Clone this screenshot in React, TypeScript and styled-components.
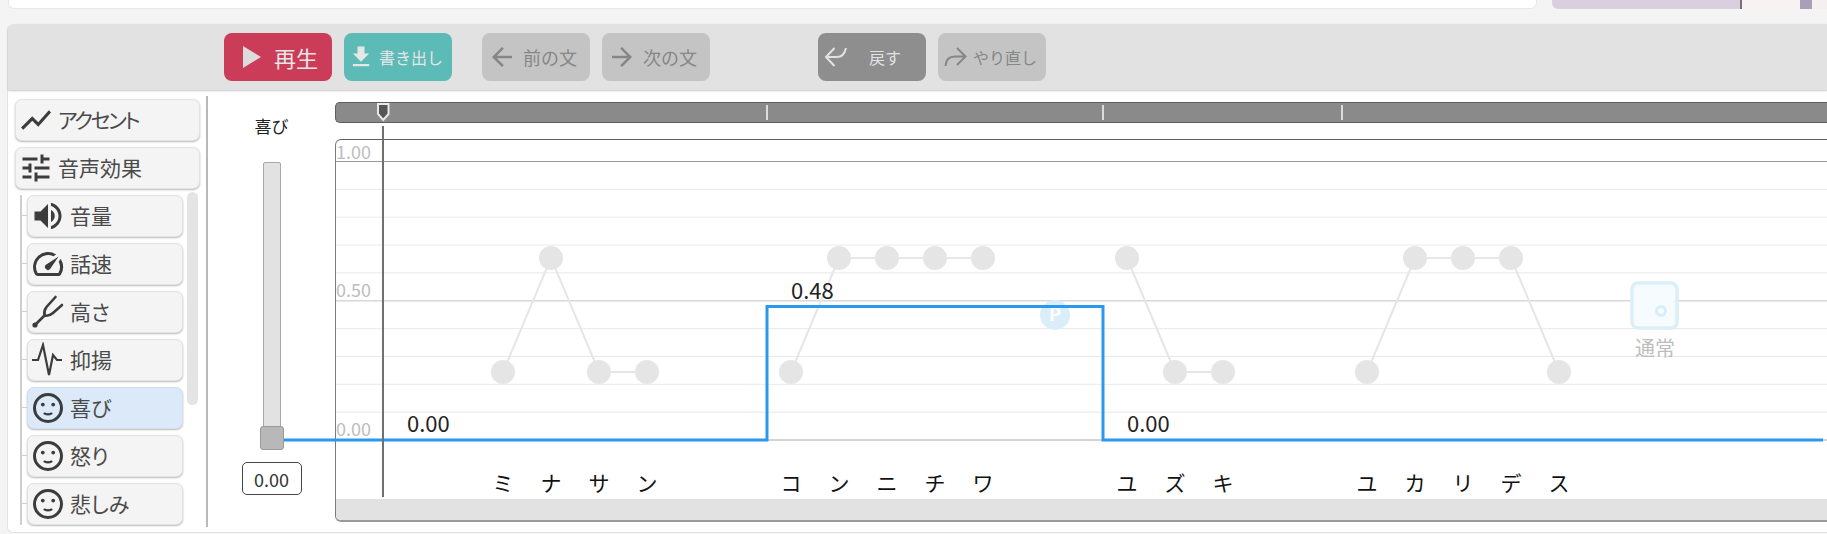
import React from "react";
import styled, { createGlobalStyle } from "styled-components";
import { MdShowChart, MdTune, MdVolumeUp, MdSpeed, MdFileDownload, MdArrowBack, MdArrowForward } from "react-icons/md";

const FONT = `"Noto Sans CJK JP", "Noto Sans", sans-serif`;

const Global = createGlobalStyle`
  html, body { margin: 0; padding: 0; background: #f4f4f4; }
  body { font-family: ${FONT}; overflow: hidden; }
`;

const Page = styled.div`
  width: 1827px;
  height: 534px;
  overflow: hidden;
  background: #f4f4f4;
`;
const TopRow = styled.div`
  display: flex;
  height: 9px;
  gap: 15px;
  padding-left: 8px;
`;
const WhiteCard = styled.div`
  width: 1529px;
  background: #fff;
  border: 1px solid #e8e8e8;
  border-top: 0;
  border-radius: 0 0 6px 6px;
  box-sizing: border-box;
`;
const ArtCard = styled.div`
  flex: 1;
  display: flex;
  border-radius: 0 0 0 6px;
  overflow: hidden;
`;
const ArtPiece = styled.div<{ $w: number; $c: string }>`
  width: ${p => p.$w}px;
  background: ${p => p.$c};
`;
const Panel = styled.div`
  margin: 15px 0 0 7px;
  width: 1820px;
  height: 509px;
  background: #fff;
  border-radius: 6px 0 0 6px;
  border-left: 1px solid #e4e4e4;
  border-bottom: 1px solid #e4e4e4;
  box-sizing: border-box;
  display: flex;
  flex-direction: column;
`;
const Toolbar = styled.div`
  height: 66px;
  flex: none;
  background: #e2e2e2;
  border-radius: 6px 0 0 0;
  box-shadow: 0 1px 2px rgba(0,0,0,.22);
  display: flex;
  align-items: center;
  gap: 12px;
  padding-left: 216px;
  position: relative;
`;
const ToolGap = styled.div<{ $w: number }>`
  width: ${p => p.$w}px;
`;
const TOOL = {
  play: { bg: "#cb3c58", fg: "#e6e6e6", size: 22, pad: 19, gap: 13 },
  export: { bg: "#5cbab7", fg: "#e6e6e6", size: 16, pad: 3, gap: 4 },
  off: { bg: "#c4c4c4", fg: "#868686", size: 18, pad: 5, gap: 6 },
  undo: { bg: "#8e8e8e", fg: "#e2e2e2", size: 16, pad: 5, gap: 18 },
  redo: { bg: "#c4c4c4", fg: "#868686", size: 16, pad: 5, gap: 2 },
};
const ToolButton = styled.div<{ $kind: keyof typeof TOOL }>`
  width: 108px;
  height: 48px;
  box-sizing: border-box;
  border-radius: 8px;
  background: ${p => TOOL[p.$kind].bg};
  color: ${p => TOOL[p.$kind].fg};
  font-size: ${p => TOOL[p.$kind].size}px;
  display: flex;
  align-items: center;
  padding-left: ${p => TOOL[p.$kind].pad}px;
  gap: ${p => TOOL[p.$kind].gap}px;
  white-space: nowrap;
  svg { flex: none; }
`;
const Body = styled.div`
  flex: 1;
  min-height: 0;
  display: flex;
`;
const Sidebar = styled.div`
  width: 200px;
  flex: none;
  box-sizing: border-box;
  margin: 6px 0 5px;
  padding: 3px 6px 0 7px;
  border-right: 2px solid #b9b9b9;
  display: flex;
  flex-direction: column;
  gap: 6px;
  overflow: hidden;
`;
const MenuButton = styled.div<{ $active?: boolean }>`
  height: 42px;
  flex: none;
  box-sizing: border-box;
  background: ${p => (p.$active ? "#dce9f9" : "#f4f4f4")};
  border: 1px solid ${p => (p.$active ? "#d3dfee" : "#e2e2e2")};
  border-radius: 7px;
  box-shadow: 0 1px 2px rgba(0,0,0,.28);
  display: flex;
  align-items: center;
  gap: 4px;
  padding: 0 0 2px 2px;
  color: #4a4a4a;
  font-size: 21px;
  font-feature-settings: "palt";
  svg { flex: none; color: #3c3c3c; margin-top: 2px; }
`;
const TightLabel = styled.span`
  letter-spacing: -2.4px;
`;
const Tree = styled.div`
  position: relative;
  margin-left: 5px;
  padding-left: 5px;
  border-left: 2px solid #cfcfcf;
  width: 156px;
  display: flex;
  flex-direction: column;
  gap: 6px;
`;
const TreeItem = styled.div`
  position: relative;
  &::before {
    content: "";
    position: absolute;
    left: -5px;
    top: 20px;
    width: 5px;
    height: 1px;
    background: #cfcfcf;
  }
`;
const ScrollThumb = styled.div`
  position: absolute;
  left: 165px;
  top: -3px;
  width: 11px;
  height: 213px;
  border-radius: 6px;
  background: #e4e4e4;
`;
const SliderColumn = styled.div`
  width: 127px;
  flex: none;
  box-sizing: border-box;
  padding-top: 25px;
  display: flex;
  flex-direction: column;
  align-items: center;
`;
const SliderLabel = styled.div`
  font-size: 17px;
  line-height: 22px;
  color: #222;
`;
const Track = styled.div`
  margin-top: 25px;
  width: 18px;
  height: 280px;
  box-sizing: border-box;
  background: #e2e2e2;
  border: 1px solid #a8a8a8;
  border-radius: 2px 2px 0 0;
  position: relative;
`;
const Thumb = styled.div`
  position: absolute;
  left: -4px;
  top: 263px;
  width: 24px;
  height: 24px;
  box-sizing: border-box;
  border-radius: 3px;
  background: #b8b8b8;
  border: 1px solid #9a9a9a;
`;
const ValueBox = styled.div`
  margin-top: 20px;
  width: 60px;
  height: 33px;
  box-sizing: border-box;
  border: 1px solid #444;
  border-radius: 5px;
  background: #fff;
  font-size: 18px;
  color: #333;
  display: flex;
  align-items: center;
  justify-content: center;
`;
const Timeline = styled.div`
  flex: 1;
  min-width: 0;
  padding-top: 12px;
  display: flex;
  flex-direction: column;
  position: relative;
`;
const Seek = styled.div`
  height: 21px;
  flex: none;
  box-sizing: border-box;
  background: #8a8a8a;
  border-top: 1px solid #5e5e5e;
  border-bottom: 1px solid #5e5e5e;
  border-left: 1px solid #5e5e5e;
  border-radius: 5px 0 0 5px;
`;
const Chart = styled.div`
  margin-top: 16px;
  height: 383px;
  flex: none;
  box-sizing: border-box;
  border-top: 1px solid #5e5e5e;
  border-left: 1px solid #7a7a7a;
  border-bottom: 2px solid #9a9a9a;
  border-radius: 6px 0 0 6px;
  display: flex;
  flex-direction: column;
`;
const ChartSpace = styled.div`
  flex: 1;
`;
const HScroll = styled.div`
  height: 21px;
  flex: none;
  background: #e2e2e2;
  border-radius: 0 0 0 5px;
`;
const Overlay = styled.svg`
  position: absolute;
  left: 0;
  top: 0;
  width: 1492px;
  height: 443px;
  overflow: visible;
  pointer-events: none;
  font-family: ${FONT};
`;
const GridText = styled.text`
  font-size: 18px;
  fill: #bdbdbd;
`;
const ValueText = styled.text`
  font-size: 22px;
  fill: #222;
`;
const KanaText = styled.text`
  font-size: 21px;
  fill: #111;
  text-anchor: middle;
`;
const ModeText = styled.text`
  font-size: 20px;
  fill: #bdbdbd;
  text-anchor: middle;
`;
const BadgeText = styled.text`
  font-size: 18px;
  font-weight: 700;
  fill: #fff;
  text-anchor: middle;
`;

const icon36 = { size: 36 };

const Smile = () => (
  <svg width="36" height="36" viewBox="0 0 36 36" fill="none">
    <circle cx="18" cy="18" r="13.5" stroke="#3c3c3c" strokeWidth="3" />
    <circle cx="12.8" cy="14.6" r="1.9" fill="#3c3c3c" />
    <circle cx="23.2" cy="14.6" r="1.9" fill="#3c3c3c" />
    <path d="M14.5 23.6c2.2 1 4.8 1 7 0" stroke="#3c3c3c" strokeWidth="2.2" strokeLinecap="round" />
  </svg>
);
const Fork = () => (
  <svg width="36" height="36" viewBox="0 0 36 36" fill="none" stroke="#3c3c3c" strokeWidth="2.6" strokeLinecap="round">
    <path d="M5 31 L14.5 21.5" />
    <path d="M25.5 3 L16.5 13 Q13.5 17 14.5 21.5 Q19 22.5 23 19 L32 11" />
    <circle cx="5" cy="31" r="2.6" fill="#3c3c3c" stroke="none" />
  </svg>
);
const Pulse = () => (
  <svg width="36" height="36" viewBox="0 0 36 36" fill="none" stroke="#3c3c3c" strokeWidth="2.2">
    <path d="M2 18 H8 L13 3 L19 33 L23 13 L27 18 H32" />
  </svg>
);
const PlayIcon = () => (
  <svg width="18" height="22" viewBox="0 0 18 22"><path d="M0 0 L18 11 L0 22 Z" fill="#dcdcdc" /></svg>
);
const UndoIcon = () => (
  <svg width="28" height="28" viewBox="0 0 28 28" fill="none" stroke="#e2e2e2" strokeWidth="2">
    <path d="M11.5 5 L3 14 L11.5 23" />
    <path d="M3 14 H14 Q21 14 23 5" />
  </svg>
);
const RedoIcon = () => (
  <svg width="28" height="28" viewBox="0 0 28 28" fill="none" stroke="#868686" strokeWidth="2">
    <path d="M14 5 L22.5 13.5 L14 22" />
    <path d="M22 13.5 H12 Q3 13.5 2.5 23" />
  </svg>
);

const XS = [503, 551, 599, 647, 791, 839, 887, 935, 983, 1127, 1175, 1223, 1367, 1415, 1463, 1511, 1559];
const KANA = "ミナサンコンニチワユズキユカリデス".split("");
const HI = [0, 1, 0, 0, 0, 1, 1, 1, 1, 1, 0, 0, 0, 1, 1, 1, 0];
const GROUPS = [[0, 4], [4, 9], [9, 12], [12, 17]];
const yOf = (i: number) => (HI[i] ? 258 : 372);

const gridColor = (i: number) => (i === 0 ? "#9a9a9a" : i === 5 ? "#d8d8d8" : i === 10 ? "#a8a8a8" : "#e9e9e9");
const GRID = Array.from({ length: 11 }, (_, i) => ({ y: 161.5 + i * 27.85, color: gridColor(i), w: i === 5 ? 1.5 : 1 }));

const SUBS: { label: string; icon: React.ReactNode; active?: boolean }[] = [
  { label: "音量", icon: <MdVolumeUp {...icon36} /> },
  { label: "話速", icon: <MdSpeed {...icon36} /> },
  { label: "高さ", icon: <Fork /> },
  { label: "抑揚", icon: <Pulse /> },
  { label: "喜び", icon: <Smile />, active: true },
  { label: "怒り", icon: <Smile /> },
  { label: "悲しみ", icon: <Smile /> },
];

export default function App() {
  return (
    <Page>
      <Global />
      <TopRow>
        <WhiteCard />
        <ArtCard>
          <ArtPiece $w={188} $c="#dacfdf" />
          <ArtPiece $w={2} $c="#77707c" />
          <ArtPiece $w={58} $c="#f8f2f2" />
          <ArtPiece $w={12} $c="#a9a0b6" />
          <ArtPiece $w={15} $c="#f6efef" />
        </ArtCard>
      </TopRow>
      <Panel>
        <Toolbar>
          <ToolButton $kind="play"><PlayIcon />再生</ToolButton>
          <ToolButton $kind="export"><MdFileDownload size={28} />書き出し</ToolButton>
          <ToolGap $w={6} />
          <ToolButton $kind="off"><MdArrowBack size={30} />前の文</ToolButton>
          <ToolButton $kind="off"><MdArrowForward size={30} />次の文</ToolButton>
          <ToolGap $w={84} />
          <ToolButton $kind="undo"><UndoIcon />戻す</ToolButton>
          <ToolButton $kind="redo"><RedoIcon />やり直し</ToolButton>
        </Toolbar>
        <Body>
          <Sidebar>
            <MenuButton><MdShowChart {...icon36} /><TightLabel>アクセント</TightLabel></MenuButton>
            <MenuButton><MdTune {...icon36} />音声効果</MenuButton>
            <Tree>
              <ScrollThumb />
              {SUBS.map(s => (
                <TreeItem key={s.label}>
                  <MenuButton $active={s.active}>{s.icon}{s.label}</MenuButton>
                </TreeItem>
              ))}
            </Tree>
          </Sidebar>
          <SliderColumn>
            <SliderLabel>喜び</SliderLabel>
            <Track><Thumb /></Track>
            <ValueBox>0.00</ValueBox>
          </SliderColumn>
          <Timeline>
            <Seek />
            <Chart>
              <ChartSpace />
              <HScroll />
            </Chart>
            <Overlay viewBox="335 90 1492 443">
              {GRID.map(g => (
                <line key={g.y} x1={336} x2={1827} y1={g.y} y2={g.y} stroke={g.color} strokeWidth={g.w} />
              ))}
              <GridText x={336} y={159}>1.00</GridText>
              <GridText x={336} y={297}>0.50</GridText>
              <GridText x={336} y={436}>0.00</GridText>
              {GROUPS.map(([a, b]) => (
                <polyline key={a} fill="none" stroke="#e6e6e6" strokeWidth={2}
                  points={XS.slice(a, b).map((x, i) => `${x},${yOf(a + i)}`).join(" ")} />
              ))}
              {XS.map((x, i) => <circle key={i} cx={x} cy={yOf(i)} r={12} fill="#e5e5e5" />)}
              {XS.map((x, i) => <KanaText key={i} x={x} y={491}>{KANA[i]}</KanaText>)}
              <rect x={1632} y={283} width={45} height={45} rx={6} fill="#f6fbfe" stroke="#dceff9" strokeWidth={3.5} />
              <circle cx={1661} cy={311} r={4.5} fill="none" stroke="#d9edf8" strokeWidth={3} />
              <ModeText x={1655} y={356}>通常</ModeText>
              <circle cx={1055} cy={315} r={15} fill="#daeef9" />
              <BadgeText x={1055} y={321}>P</BadgeText>
              <path d="M284 440 H767 V306.5 H1103 V440 H1823" fill="none" stroke="#2b98f0" strokeWidth={3} />
              <ValueText x={407} y={432}>0.00</ValueText>
              <ValueText x={791} y={299}>0.48</ValueText>
              <ValueText x={1127} y={432}>0.00</ValueText>
              <line x1={383} x2={383} y1={126} y2={497} stroke="#707070" strokeWidth={2} />
              {[767, 1103, 1342].map(x => <rect key={x} x={x - 1} y={105} width={2} height={15} fill="#dcdcdc" />)}
              <path d="M378 104 H388.5 V114 L383.2 120 L378 114 Z" fill="#555" stroke="#e8e8e8" strokeWidth={2} />
            </Overlay>
          </Timeline>
        </Body>
      </Panel>
    </Page>
  );
}
